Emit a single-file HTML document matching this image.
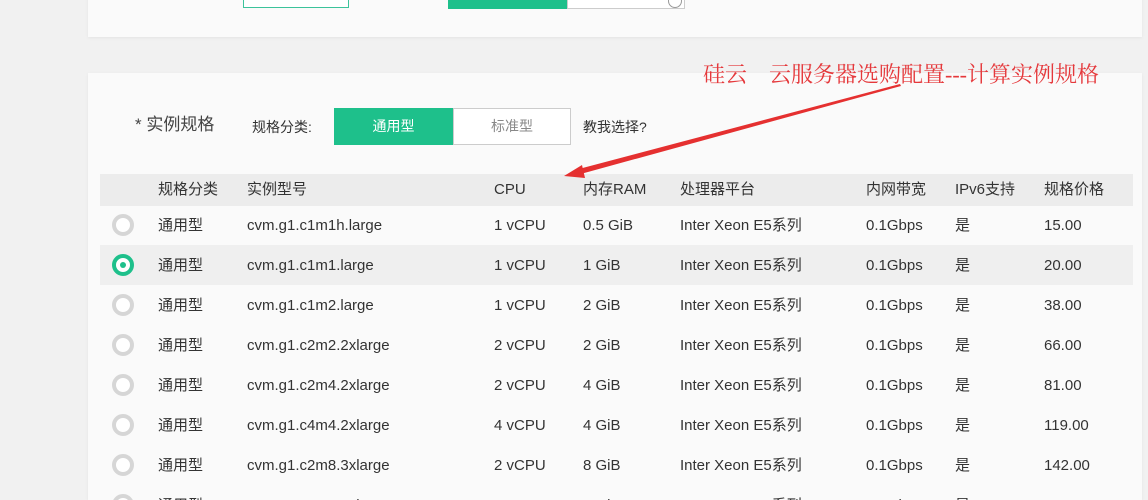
<!DOCTYPE html>
<html style="width:1148px;height:500px;overflow:hidden"><head><meta charset="utf-8"><style>
*{margin:0;padding:0;box-sizing:border-box}
body{width:1148px;height:500px;overflow:hidden;background:#f1f1f1;position:relative;font-family:"Liberation Sans","Noto Sans CJK SC",sans-serif;color:#333}
.a{position:absolute;white-space:nowrap}
.card{position:absolute;background:#fafafa;box-shadow:0 1px 3px rgba(0,0,0,.06)}
.row{position:absolute;left:100px;width:1033px;height:40px;font-size:15px}
.row span{position:absolute;top:1px;line-height:40px}
.radio{position:absolute;left:12px;top:9px;width:22px;height:22px;border:4px solid #d6d6d6;border-radius:50%;background:#fff}
.sel .radio{border:4px solid #1ec08b;}
.sel .radio::after{content:"";position:absolute;left:4px;top:4px;width:6px;height:6px;border-radius:50%;background:#1ec08b}
</style></head><body>
<div class="card" style="left:88px;top:-5px;width:1054px;height:42px"></div>
<div class="a" style="left:243px;top:-2px;width:106px;height:10px;border:1px solid #3cc39b;background:#fff"></div>
<div class="a" style="left:448px;top:-2px;width:119px;height:11px;background:#1ec08b"></div>
<div class="a" style="left:567px;top:-2px;width:118px;height:11px;border:1px solid #ccc;background:#fff"></div>
<div class="a" style="left:668px;top:-6px;width:14px;height:14px;border:1px solid #999;border-radius:50%"></div>

<div class="card" style="left:88px;top:73px;width:1054px;height:427px"></div>
<div class="a" style="left:135px;top:110px;font-size:17px;color:#444">* 实例规格</div>
<div class="a" style="left:252px;top:117px;font-size:14px">规格分类:</div>
<div class="a" style="left:334px;top:108px;width:119px;height:37px;background:#1ec08b;color:#fff;font-size:14px;text-align:center;line-height:37px">通用型</div>
<div class="a" style="left:453px;top:108px;width:118px;height:37px;border:1px solid #ccc;background:#fff;color:#888;font-size:14px;text-align:center;line-height:35px">标准型</div>
<div class="a" style="left:583px;top:117px;font-size:14px">教我选择?</div>

<div class="a" style="left:100px;top:174px;width:1033px;height:32px;background:#ececec"></div>
<div class="row" style="top:169px"><span style="left:58px">规格分类</span><span style="left:147px">实例型号</span><span style="left:394px">CPU</span><span style="left:483px">内存RAM</span><span style="left:580px">处理器平台</span><span style="left:766px">内网带宽</span><span style="left:855px">IPv6支持</span><span style="left:944px">规格价格</span></div>

<div class="row" style="top:205px"><i class="radio"></i><span style="left:58px">通用型</span><span style="left:147px">cvm.g1.c1m1h.large</span><span style="left:394px">1 vCPU</span><span style="left:483px">0.5 GiB</span><span style="left:580px">Inter Xeon E5系列</span><span style="left:766px">0.1Gbps</span><span style="left:855px">是</span><span style="left:944px">15.00</span></div>
<div class="row sel" style="top:245px;background:#efefef"><i class="radio"></i><span style="left:58px">通用型</span><span style="left:147px">cvm.g1.c1m1.large</span><span style="left:394px">1 vCPU</span><span style="left:483px">1 GiB</span><span style="left:580px">Inter Xeon E5系列</span><span style="left:766px">0.1Gbps</span><span style="left:855px">是</span><span style="left:944px">20.00</span></div>
<div class="row" style="top:285px"><i class="radio"></i><span style="left:58px">通用型</span><span style="left:147px">cvm.g1.c1m2.large</span><span style="left:394px">1 vCPU</span><span style="left:483px">2 GiB</span><span style="left:580px">Inter Xeon E5系列</span><span style="left:766px">0.1Gbps</span><span style="left:855px">是</span><span style="left:944px">38.00</span></div>
<div class="row" style="top:325px"><i class="radio"></i><span style="left:58px">通用型</span><span style="left:147px">cvm.g1.c2m2.2xlarge</span><span style="left:394px">2 vCPU</span><span style="left:483px">2 GiB</span><span style="left:580px">Inter Xeon E5系列</span><span style="left:766px">0.1Gbps</span><span style="left:855px">是</span><span style="left:944px">66.00</span></div>
<div class="row" style="top:365px"><i class="radio"></i><span style="left:58px">通用型</span><span style="left:147px">cvm.g1.c2m4.2xlarge</span><span style="left:394px">2 vCPU</span><span style="left:483px">4 GiB</span><span style="left:580px">Inter Xeon E5系列</span><span style="left:766px">0.1Gbps</span><span style="left:855px">是</span><span style="left:944px">81.00</span></div>
<div class="row" style="top:405px"><i class="radio"></i><span style="left:58px">通用型</span><span style="left:147px">cvm.g1.c4m4.2xlarge</span><span style="left:394px">4 vCPU</span><span style="left:483px">4 GiB</span><span style="left:580px">Inter Xeon E5系列</span><span style="left:766px">0.1Gbps</span><span style="left:855px">是</span><span style="left:944px">119.00</span></div>
<div class="row" style="top:445px"><i class="radio"></i><span style="left:58px">通用型</span><span style="left:147px">cvm.g1.c2m8.3xlarge</span><span style="left:394px">2 vCPU</span><span style="left:483px">8 GiB</span><span style="left:580px">Inter Xeon E5系列</span><span style="left:766px">0.1Gbps</span><span style="left:855px">是</span><span style="left:944px">142.00</span></div>
<div class="row" style="top:485px"><i class="radio"></i><span style="left:58px">通用型</span><span style="left:147px">cvm.g1.c4m8.3xlarge</span><span style="left:394px">4 vCPU</span><span style="left:483px">8 GiB</span><span style="left:580px">Inter Xeon E5系列</span><span style="left:766px">0.1Gbps</span><span style="left:855px">是</span><span style="left:944px">180.00</span></div>

<div class="a" style="left:703px;top:58px;font-family:'Liberation Serif','Noto Serif CJK SC',serif;font-size:22px;color:#e5383b">硅云&nbsp;&nbsp;&nbsp;&nbsp;云服务器选购配置---计算实例规格</div>
<svg class="a" style="left:0;top:0" width="1148" height="500">
<polygon points="900,84 575,170 577,175 901,86" fill="#e53030"/>
<polygon points="564,176 582,165 585,178" fill="#e53030"/>
</svg>
</body></html>
